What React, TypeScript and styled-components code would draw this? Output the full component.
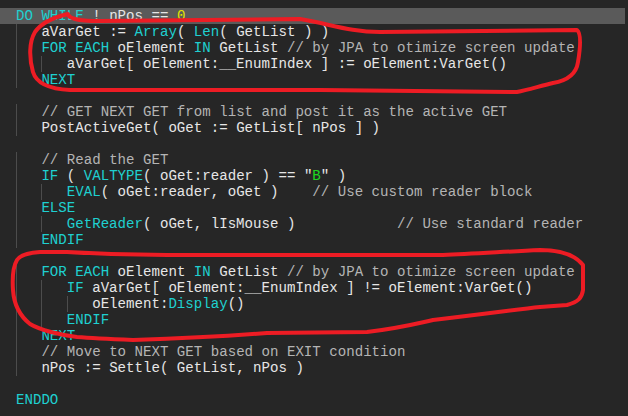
import React from "react";
import styled, { createGlobalStyle } from "styled-components";

const GlobalStyle = createGlobalStyle`
  html, body {
    margin: 0;
    padding: 0;
    background: #262626;
  }
  #root {
    width: 628px;
    height: 416px;
    overflow: hidden;
  }
`;

type Kind = "k" | "t" | "c" | "s" | "n";

const colors: Record<Kind, string> = {
  k: "#1fd0d0",
  t: "#e6e6e6",
  c: "#b4b4b4",
  s: "#1fd81f",
  n: "#e4e400",
};

const Frame = styled.div`
  position: relative;
  width: 628px;
  height: 416px;
  background: #262626;
  overflow: hidden;
`;

const Editor = styled.div`
  display: flex;
  flex-direction: column;
  width: 625px;
  padding-top: 8px;
  font-family: "Liberation Mono", monospace;
  font-size: 14.12px;
  line-height: 16px;
  white-space: pre;
`;

const Line = styled.div<{ $current?: boolean }>`
  display: flex;
  align-items: stretch;
  height: 16px;
  padding-left: 16px;
  background: ${(p) => (p.$current ? "#5a5a5a" : "transparent")};
`;

const Guide = styled.span`
  flex: none;
  box-sizing: border-box;
  width: 3ch;
  border-left: 1px solid #4c4c4c;
`;

const Token = styled.span<{ $kind: Kind }>`
  color: ${(p) => colors[p.$kind]};
`;

const Overlay = styled.svg`
  position: absolute;
  left: 0;
  top: 0;
  pointer-events: none;
`;

type Tok = [Kind, string];
type Src = { indent: number; tokens: Tok[]; current?: boolean };

const forEach: Tok[] = [
  ["k", "FOR EACH"],
  ["t", " oElement "],
  ["k", "IN"],
  ["t", " GetList "],
  ["c", "// by JPA to otimize screen update"],
];

const code: Src[] = [
  { indent: 0, current: true, tokens: [["k", "DO WHILE"], ["t", " ! nPos == "], ["n", "0"]] },
  { indent: 1, tokens: [["t", "aVarGet := "], ["k", "Array"], ["t", "( "], ["k", "Len"], ["t", "( GetList ) )"]] },
  { indent: 1, tokens: forEach },
  { indent: 2, tokens: [["t", "aVarGet[ oElement:__EnumIndex ] := oElement:VarGet()"]] },
  { indent: 1, tokens: [["k", "NEXT"]] },
  { indent: 0, tokens: [] },
  { indent: 1, tokens: [["c", "// GET NEXT GET from list and post it as the active GET"]] },
  { indent: 1, tokens: [["t", "PostActiveGet( oGet := GetList[ nPos ] )"]] },
  { indent: 0, tokens: [] },
  { indent: 1, tokens: [["c", "// Read the GET"]] },
  {
    indent: 1,
    tokens: [["k", "IF"], ["t", " ( "], ["k", "VALTYPE"], ["t", "( oGet:reader ) == "], ["t", "\""], ["s", "B"], ["t", "\""], ["t", " )"]],
  },
  { indent: 2, tokens: [["k", "EVAL"], ["t", "( oGet:reader, oGet )    "], ["c", "// Use custom reader block"]] },
  { indent: 1, tokens: [["k", "ELSE"]] },
  { indent: 2, tokens: [["k", "GetReader"], ["t", "( oGet, lIsMouse )            "], ["c", "// Use standard reader"]] },
  { indent: 1, tokens: [["k", "ENDIF"]] },
  { indent: 0, tokens: [] },
  { indent: 1, tokens: forEach },
  { indent: 2, tokens: [["k", "IF"], ["t", " aVarGet[ oElement:__EnumIndex ] != oElement:VarGet()"]] },
  { indent: 3, tokens: [["t", "oElement:"], ["k", "Display"], ["t", "()"]] },
  { indent: 2, tokens: [["k", "ENDIF"]] },
  { indent: 1, tokens: [["k", "NEXT"]] },
  { indent: 1, tokens: [["c", "// Move to NEXT GET based on EXIT condition"]] },
  { indent: 1, tokens: [["t", "nPos := Settle( GetList, nPos )"]] },
  { indent: 0, tokens: [] },
  { indent: 0, tokens: [["k", "ENDDO"]] },
];

const circleTop =
  "M 68 14 C 69 18, 75 21, 100 21 L 300 19 C 330 24, 350 32, 380 32 L 577 30 " +
  "C 582 34, 580 50, 578 62 C 576 76, 565 81, 553 83 C 540 86, 528 90, 517 92 " +
  "L 320 90 L 70 90 C 48 89, 36 82, 33 72 C 29 58, 29 42, 35 32 C 42 22, 55 17, 68 14 Z";

const circleBottom =
  "M 17 260 C 20 255, 27 253, 40 252 L 67 252 C 100 254, 140 255, 167 255 L 443 255 " +
  "C 470 254, 500 252, 540 250 C 560 250, 575 255, 583 265 L 583 290 " +
  "C 582 298, 578 302, 567 305 L 540 307 C 520 309, 500 312, 433 320 " +
  "C 415 324, 400 328, 367 332 L 267 333 C 230 336, 200 338, 133 340 " +
  "C 110 339, 90 338, 77 337 C 60 335, 40 330, 30 324 C 20 316, 14 305, 13 290 " +
  "C 12 275, 14 265, 17 260 Z";

export default function App() {
  return (
    <>
      <GlobalStyle />
      <Frame>
        <Editor>
          {code.map((line, i) => (
            <Line key={i} $current={line.current}>
              {Array.from({ length: line.indent }).map((_, g) => (
                <Guide key={g} />
              ))}
              {line.tokens.map(([kind, text], j) => (
                <Token key={j} $kind={kind}>
                  {text}
                </Token>
              ))}
            </Line>
          ))}
        </Editor>
        <Overlay width="628" height="416" viewBox="0 0 628 416">
          <path d={circleTop} fill="none" stroke="#ed1c24" strokeWidth="4" strokeLinejoin="round" />
          <path d={circleBottom} fill="none" stroke="#ed1c24" strokeWidth="4" strokeLinejoin="round" />
        </Overlay>
      </Frame>
    </>
  );
}
